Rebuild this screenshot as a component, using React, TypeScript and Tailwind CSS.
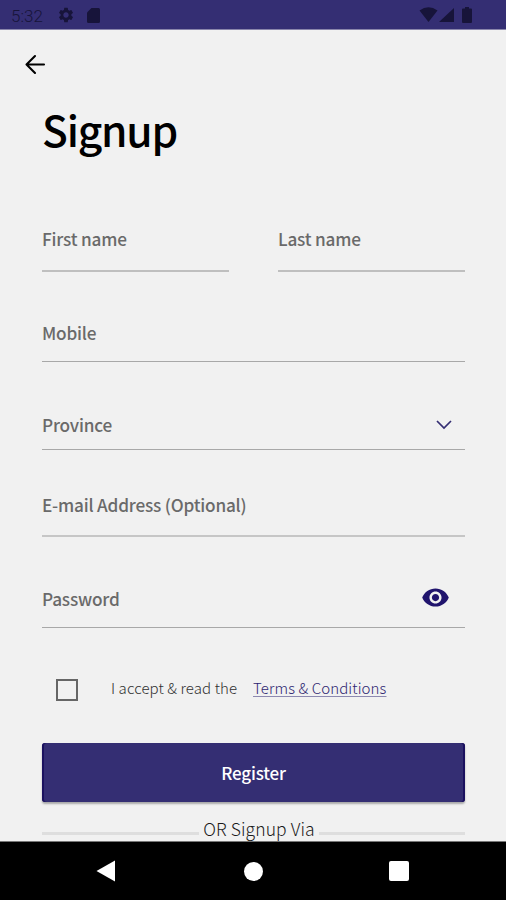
import type { ReactNode } from "react";
import { MdSettings, MdVisibility } from "react-icons/md";

function StatusBar() {
  return (
    <header className="flex h-[30px] shrink-0 items-start border-b border-[#8985ab] bg-[#342e73] pr-[34px] pl-[11px] text-[#17143a]">
      <span className="mt-[6px] w-[46px] font-['Roboto',sans-serif] text-[17px] leading-[20px] font-light">5:32</span>
      <MdSettings className="mt-[6px] size-[18px]" />
      <svg className="mt-[8px] ml-[12px] h-[15px] w-[13px]" viewBox="0 0 13 15" fill="currentColor">
        <path d="M4.5 0H11.5Q13 0 13 1.5V13.5Q13 15 11.5 15H1.500Q0 15 0 13.5V4.500Z" />
      </svg>
      <div className="ml-auto flex">
        <svg className="mt-[7px] h-[16px] w-[19px]" viewBox="0 0 19 16" fill="currentColor">
          <path d="M0.500 3.500Q9.500-3 18.500 3.500L9.500 15Z" />
        </svg>
        <svg className="mt-[8px] ml-[1px] h-[14px] w-[15px]" viewBox="0 0 15 14" fill="currentColor">
          <path d="M15 0V14H0Z" />
        </svg>
        <svg className="mt-[7px] ml-[8px] h-[16px] w-[10px]" viewBox="0 0 10 16" fill="currentColor">
          <path d="M3 0H7V1.500H9Q10 1.500 10 2.500V15Q10 16 9 16H1Q0 16 0 15V2.500Q0 1.500 1 1.500H3Z" />
        </svg>
      </div>
    </header>
  );
}

function Field({ label, className, children }: { label: string; className: string; children?: ReactNode }) {
  return (
    <label className={`flex justify-between text-[17.2px] leading-[24px] font-medium tracking-[-0.2px] text-[#6a6a6a] ${className}`}>
      <span className="whitespace-nowrap">{label}</span>
      {children}
    </label>
  );
}

function NavBar() {
  return (
    <nav className="flex h-[58px] shrink-0 items-center bg-black pl-[96px] text-white">
      <svg className="h-[22px] w-[19px]" viewBox="0 0 19 22" fill="currentColor">
        <path d="M19 0.500V21.500L0.500 11Z" />
      </svg>
      <span className="ml-[129px] size-[19px] rounded-full bg-white" />
      <span className="ml-[126px] size-[20px] rounded-[2px] bg-white" />
    </nav>
  );
}

export default function App() {
  return (
    <div className="flex h-[900px] w-[506px] flex-col overflow-hidden bg-[#f1f1f1] font-['Noto_Sans_CJK_SC','Noto_Sans_CJK_JP',sans-serif]">
      <StatusBar />
      <main className="flex h-[812px] shrink-0 flex-col overflow-hidden border-b border-[#777777]">
        <button className="mt-[20px] ml-[20px] size-[29px] shrink-0 text-black">
          <svg className="size-[29px]" viewBox="0 0 29 29" fill="none" stroke="currentColor" strokeWidth="2.100" strokeLinecap="round" strokeLinejoin="round">
            <path d="M15 6L6.500 14.500L15 23M6.500 14.500H24" />
          </svg>
        </button>
        <div className="flex flex-col pr-[41px] pl-[42px]">
          <h1 className="mt-[18px] h-[64px] text-[42.5px] leading-[64px] font-medium tracking-[-1.2px] text-black">Signup</h1>
          <div className="mt-[66px] grid grid-cols-2 gap-[49px]">
            <Field label="First name" className="h-[45px] border-b-2 border-[#bfbfbf]" />
            <Field label="Last name" className="h-[45px] border-b-2 border-[#bfbfbf]" />
          </div>
          <Field label="Mobile" className="mt-[49px] h-[41px] border-b border-[#a8a8a8]" />
          <Field label="Province" className="mt-[51px] h-[37px] border-b border-[#a8a8a8]">
            <svg className="mt-[7px] mr-[13px] h-[10px] w-[16px]" viewBox="0 0 16 10" fill="none" stroke="#342e73" strokeWidth="1.700">
              <path d="M1 1L8 8L15 1" />
            </svg>
          </Field>
          <Field label="E-mail Address (Optional)" className="mt-[43px] h-[44px] border-b-2 border-[#c6c6c6]" />
          <Field label="Password" className="mt-[50px] h-[41px] border-b border-[#a8a8a8]">
            <MdVisibility className="-mt-[4px] mr-[15px] size-[29px] text-[#20146d]" />
          </Field>
          <div className="mt-[49px] flex h-[24px] text-[15px] leading-[22px] font-light tracking-[0.1px]">
            <span className="mt-[2px] ml-[14px] size-[22px] border-2 border-[#666666]" />
            <span className="ml-[33px] w-[142px] whitespace-nowrap text-[#303030]">I accept &amp; read the</span>
            <a className="whitespace-nowrap text-[#2d2570] underline decoration-[#8d89b0] underline-offset-[2px]">Terms &amp; Conditions</a>
          </div>
          <button className="mt-[42px] h-[59px] rounded-[3px] bg-[#342e73] text-[17px] leading-[24px] font-medium tracking-[-0.2px] text-white shadow-[inset_2px_0_0_#1b115f,inset_-2px_0_0_#1b115f,0_2px_2px_rgba(0,0,0,0.3)]">
            Register
          </button>
          <div className="mt-[14px] flex h-[26px] shrink-0 items-center text-[17.5px] leading-[26px] font-light tracking-[0.1px] text-[#1a1a1a]">
            <span className="mt-[8px] h-[3px] w-[157px] bg-[#dedede]" />
            <span className="flex-1 text-center whitespace-nowrap">OR Signup Via</span>
            <span className="mt-[8px] h-[3px] w-[146px] bg-[#dedede]" />
          </div>
        </div>
      </main>
      <NavBar />
    </div>
  );
}
